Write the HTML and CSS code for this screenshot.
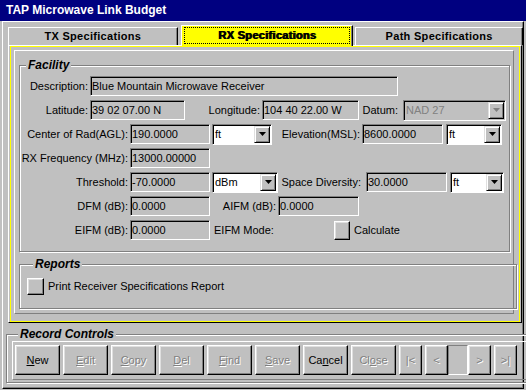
FILE: index.html
```html
<!DOCTYPE html>
<html lang="en">
<head>
    <meta charset="UTF-8">
    <title>TAP Microwave Link Budget</title>
    <link rel="stylesheet" href="styles.css">
</head>
<body>
    <div class="window">
        <div class="titlebar">TAP Microwave Link Budget</div>
        <div class="client">
            <div class="tabstrip">
                <div class="tab tab-tx">TX Specifications</div>
                <div class="tab tab-rx active"><span class="focus">RX Specifications</span></div>
                <div class="tab tab-path">Path Specifications</div>
            </div>
            <div class="tabpage">
                <div class="yellow-frame">
                    <div class="page-inner">
                        <fieldset class="group facility">
                            <legend>Facility</legend>
                            <div class="row">
                                <span class="lbl w70">Description:</span>
                                <input class="field w308" readonly value="Blue Mountain Microwave Receiver">
                            </div>
                            <div class="row">
                                <span class="lbl w70">Latitude:</span>
                                <input class="field w95" readonly value="39 02 07.00 N">
                                <span class="lbl w77">Longitude:</span>
                                <input class="field w97" readonly value="104 40 22.00 W">
                                <span class="lbl w44 pad5">Datum:</span>
                                <div class="combo disabled w103"><span class="combo-text">NAD 27</span><span class="arrow"><svg width="7" height="4" viewBox="0 0 7 4"><path d="M0 0h7L3.5 4z" fill="#808080"/></svg></span></div>
                            </div>
                            <div class="row">
                                <span class="lbl w110">Center of Rad(AGL):</span>
                                <input class="field w80" readonly value="190.0000">
                                <div class="combo w60 ml2"><span class="combo-text">ft</span><span class="arrow"><svg width="7" height="4" viewBox="0 0 7 4"><path d="M0 0h7L3.5 4z"/></svg></span></div>
                                <span class="lbl w90">Elevation(MSL):</span>
                                <input class="field w81" readonly value="8600.0000">
                                <div class="combo w56 ml3"><span class="combo-text">ft</span><span class="arrow"><svg width="7" height="4" viewBox="0 0 7 4"><path d="M0 0h7L3.5 4z"/></svg></span></div>
                            </div>
                            <div class="row">
                                <span class="lbl w110">RX Frequency (MHz):</span>
                                <input class="field w80" readonly value="13000.00000">
                            </div>
                            <div class="row">
                                <span class="lbl w110">Threshold:</span>
                                <input class="field w80" readonly value="-70.0000">
                                <div class="combo w66 ml2"><span class="combo-text">dBm</span><span class="arrow"><svg width="7" height="4" viewBox="0 0 7 4"><path d="M0 0h7L3.5 4z"/></svg></span></div>
                                <span class="lbl w88 pad5">Space Diversity:</span>
                                <input class="field w81" readonly value="30.0000">
                                <div class="combo w54 ml3"><span class="combo-text">ft</span><span class="arrow"><svg width="7" height="4" viewBox="0 0 7 4"><path d="M0 0h7L3.5 4z"/></svg></span></div>
                            </div>
                            <div class="row">
                                <span class="lbl w110">DFM (dB):</span>
                                <input class="field w80" readonly value="0.0000">
                                <span class="lbl w68">AIFM (dB):</span>
                                <input class="field w81" readonly value="0.0000">
                            </div>
                            <div class="row">
                                <span class="lbl w110">EIFM (dB):</span>
                                <input class="field w80" readonly value="0.0000">
                                <span class="plain w124">EIFM Mode:</span>
                                <button class="btn small"></button>
                                <span class="plain">Calculate</span>
                            </div>
                        </fieldset>
                        <fieldset class="group reports">
                            <legend>Reports</legend>
                            <div class="row">
                                <button class="btn print"></button>
                                <span class="plain">Print Receiver Specifications Report</span>
                            </div>
                        </fieldset>
                    </div>
                </div>
            </div>
            <fieldset class="group records">
                <legend>Record Controls</legend>
                <div class="button-bar">
                    <button class="btn cmd"><u>N</u>ew</button>
                    <button class="btn cmd off"><u>E</u>dit</button>
                    <button class="btn cmd off"><u>C</u>opy</button>
                    <button class="btn cmd off"><u>D</u>el</button>
                    <button class="btn cmd off"><u>F</u>ind</button>
                    <button class="btn cmd off"><u>S</u>ave</button>
                    <button class="btn cmd">Ca<u>n</u>cel</button>
                    <button class="btn cmd off">Cl<u>o</u>se</button>
                    <button class="btn nav off">|&lt;</button>
                    <button class="btn nav off">&lt;</button>
                    <span class="pos-box"></span>
                    <button class="btn nav off">&gt;</button>
                    <button class="btn nav off">&gt;|</button>
                </div>
            </fieldset>
        </div>
    </div>
</body>
</html>
```

FILE: styles.css
```css
body {
    margin: 0;
    background: #c0c0c0;
    font-family: "Liberation Sans", Arial, sans-serif;
    font-size: 11px;
    color: #000;
}
.window {
    width: 526px;
    height: 390px;
    overflow: hidden;
}
.titlebar {
    height: 21px;
    line-height: 20px;
    background: #000080;
    color: #fff;
    font-weight: bold;
    font-size: 12px;
    padding-left: 6px;
    box-sizing: border-box;
}
.client {
    height: 368px;
    margin: 0 2px;
    border: 1px solid;
    border-color: #fff #000 #000 #fff;
    box-shadow: inset -1px -1px 0 #808080;
    box-sizing: border-box;
}

/* tabs */
.tabstrip {
    display: flex;
    align-items: flex-end;
    height: 23px;
    margin-left: 5px;
}
.tab {
    height: 17px;
    line-height: 17px;
    text-align: center;
    font-weight: bold;
    letter-spacing: 0.3px;
    border: 1px solid;
    border-bottom: none;
    border-color: #fff #000 #000 #fff;
    box-shadow: inset -1px 0 0 #808080;
}
.tab-tx { width: 170px; }
.tab-rx { width: 169px; margin-left: 3px; }
.tab-path { width: 168px; margin-left: 2px; }
.tab.active {
    height: 19px;
    background: #ff0;
    position: relative;
    z-index: 1;
    margin-bottom: -1px;
    padding: 1px 2px 0;
    box-sizing: content-box;
}
.focus {
    display: block;
    height: 15px;
    line-height: 15px;
    border: 1px dotted #000;
    text-shadow: 1px 0 0 #000;
}
.tabpage {
    width: 514px;
    height: 278px;
    margin-left: 5px;
    padding: 0 1px 1px 1px;
    border: 1px solid;
    border-color: #fff #000 #000 #fff;
    box-sizing: border-box;
}
.yellow-frame {
    height: 276px;
    border: 1px solid #ff0;
    box-sizing: border-box;
    padding: 3px 0 0 3px;
}
.page-inner {
    width: 500px;
    height: 264px;
    border: 1px solid;
    border-color: #fff #808080 #808080 #fff;
    box-sizing: border-box;
    padding-left: 4px;
}

/* group boxes */
.group {
    margin: 0;
    padding: 0;
    min-inline-size: 0;
    border: 1px solid #808080;
    box-shadow: inset 1px 1px 0 #fff, 1px 1px 0 #fff;
}
.group legend {
    font-weight: bold;
    font-style: italic;
    font-size: 12px;
    line-height: 14px;
    padding: 0 2px;
    margin-left: 6px;
    background: #c0c0c0;
}
.facility {
    width: 489px;
    margin-top: 7px;
    padding: 4px 0 11px;
}
.reports {
    width: 489px;
    margin-top: 5px;
    padding: 5px 0 12px 7px;
}
.records {
    width: 515px;
    margin: 4px 0 0 3px;
    padding: 0 3px 2px 5px;
}

/* rows */
.row {
    display: flex;
    align-items: center;
    height: 20px;
    margin-bottom: 4px;
}
.row:last-child { margin-bottom: 0; }
.lbl {
    flex: none;
    text-align: right;
    padding-right: 2px;
    box-sizing: border-box;
    white-space: nowrap;
}
.pad5 { padding-right: 5px; }
.plain {
    flex: none;
    white-space: nowrap;
    padding-left: 4px;
    box-sizing: border-box;
}
.field {
    flex: none;
    height: 20px;
    margin: 0;
    padding: 0 0 0 1px;
    font: inherit;
    color: #000;
    background: #c0c0c0;
    border: 1px solid;
    border-color: #808080 #fff #fff #808080;
    box-shadow: inset 1px 1px 0 #000;
    box-sizing: border-box;
    outline: none;
}
.combo {
    flex: none;
    display: flex;
    align-items: center;
    height: 21px;
    background: #fff;
    border: 1px solid;
    border-color: #808080 #fff #fff #808080;
    box-shadow: inset 1px 1px 0 #000;
    box-sizing: border-box;
    padding: 1px 1px 1px 2px;
}
.combo-text { flex: 1; }
.combo.disabled { background: #c0c0c0; color: #808080; }
.arrow {
    width: 16px;
    height: 17px;
    display: flex;
    align-items: center;
    justify-content: center;
    background: #c0c0c0;
    border: 1px solid;
    border-color: #dfdfdf #000 #000 #dfdfdf;
    box-shadow: inset 1px 1px 0 #fff, inset -1px -1px 0 #808080;
    box-sizing: border-box;
}

.w44 { width: 44px; }
.w54 { width: 54px; }
.w56 { width: 56px; }
.w60 { width: 60px; }
.w66 { width: 66px; }
.w68 { width: 68px; }
.w70 { width: 70px; }
.w77 { width: 77px; }
.w80 { width: 80px; }
.w81 { width: 81px; }
.w88 { width: 88px; }
.w90 { width: 90px; }
.w95 { width: 95px; }
.w97 { width: 97px; }
.w103 { width: 103px; }
.w110 { width: 110px; }
.w124 { width: 124px; }
.w308 { width: 308px; }
.ml2 { margin-left: 2px; }
.ml3 { margin-left: 3px; }

/* buttons */
.btn {
    flex: none;
    margin: 0;
    padding: 0;
    font: inherit;
    font-weight: normal;
    color: #000;
    background: #c0c0c0;
    border: 1px solid;
    border-color: #fff #000 #000 #fff;
    box-shadow: inset -1px -1px 0 #808080, inset 1px 1px 0 #dfdfdf;
    box-sizing: border-box;
}
.btn.small { width: 16px; height: 19px; }
.btn.print { width: 17px; height: 17px; }
.btn.off {
    color: #808080;
    text-shadow: 1px 1px 0 #fff;
}
.button-bar {
    display: flex;
    gap: 3px;
    padding: 3px 2px 4px;
    border: 1px solid;
    border-color: #fff #808080 #808080 #fff;
}
.cmd { width: 45px; height: 30px; }
.nav { width: 23px; height: 30px; }
.pos-box {
    width: 20px;
    height: 30px;
    margin: 0 -3px;
    border: 1px solid;
    border-color: #808080 #fff #fff #808080;
    box-sizing: border-box;
}
```
